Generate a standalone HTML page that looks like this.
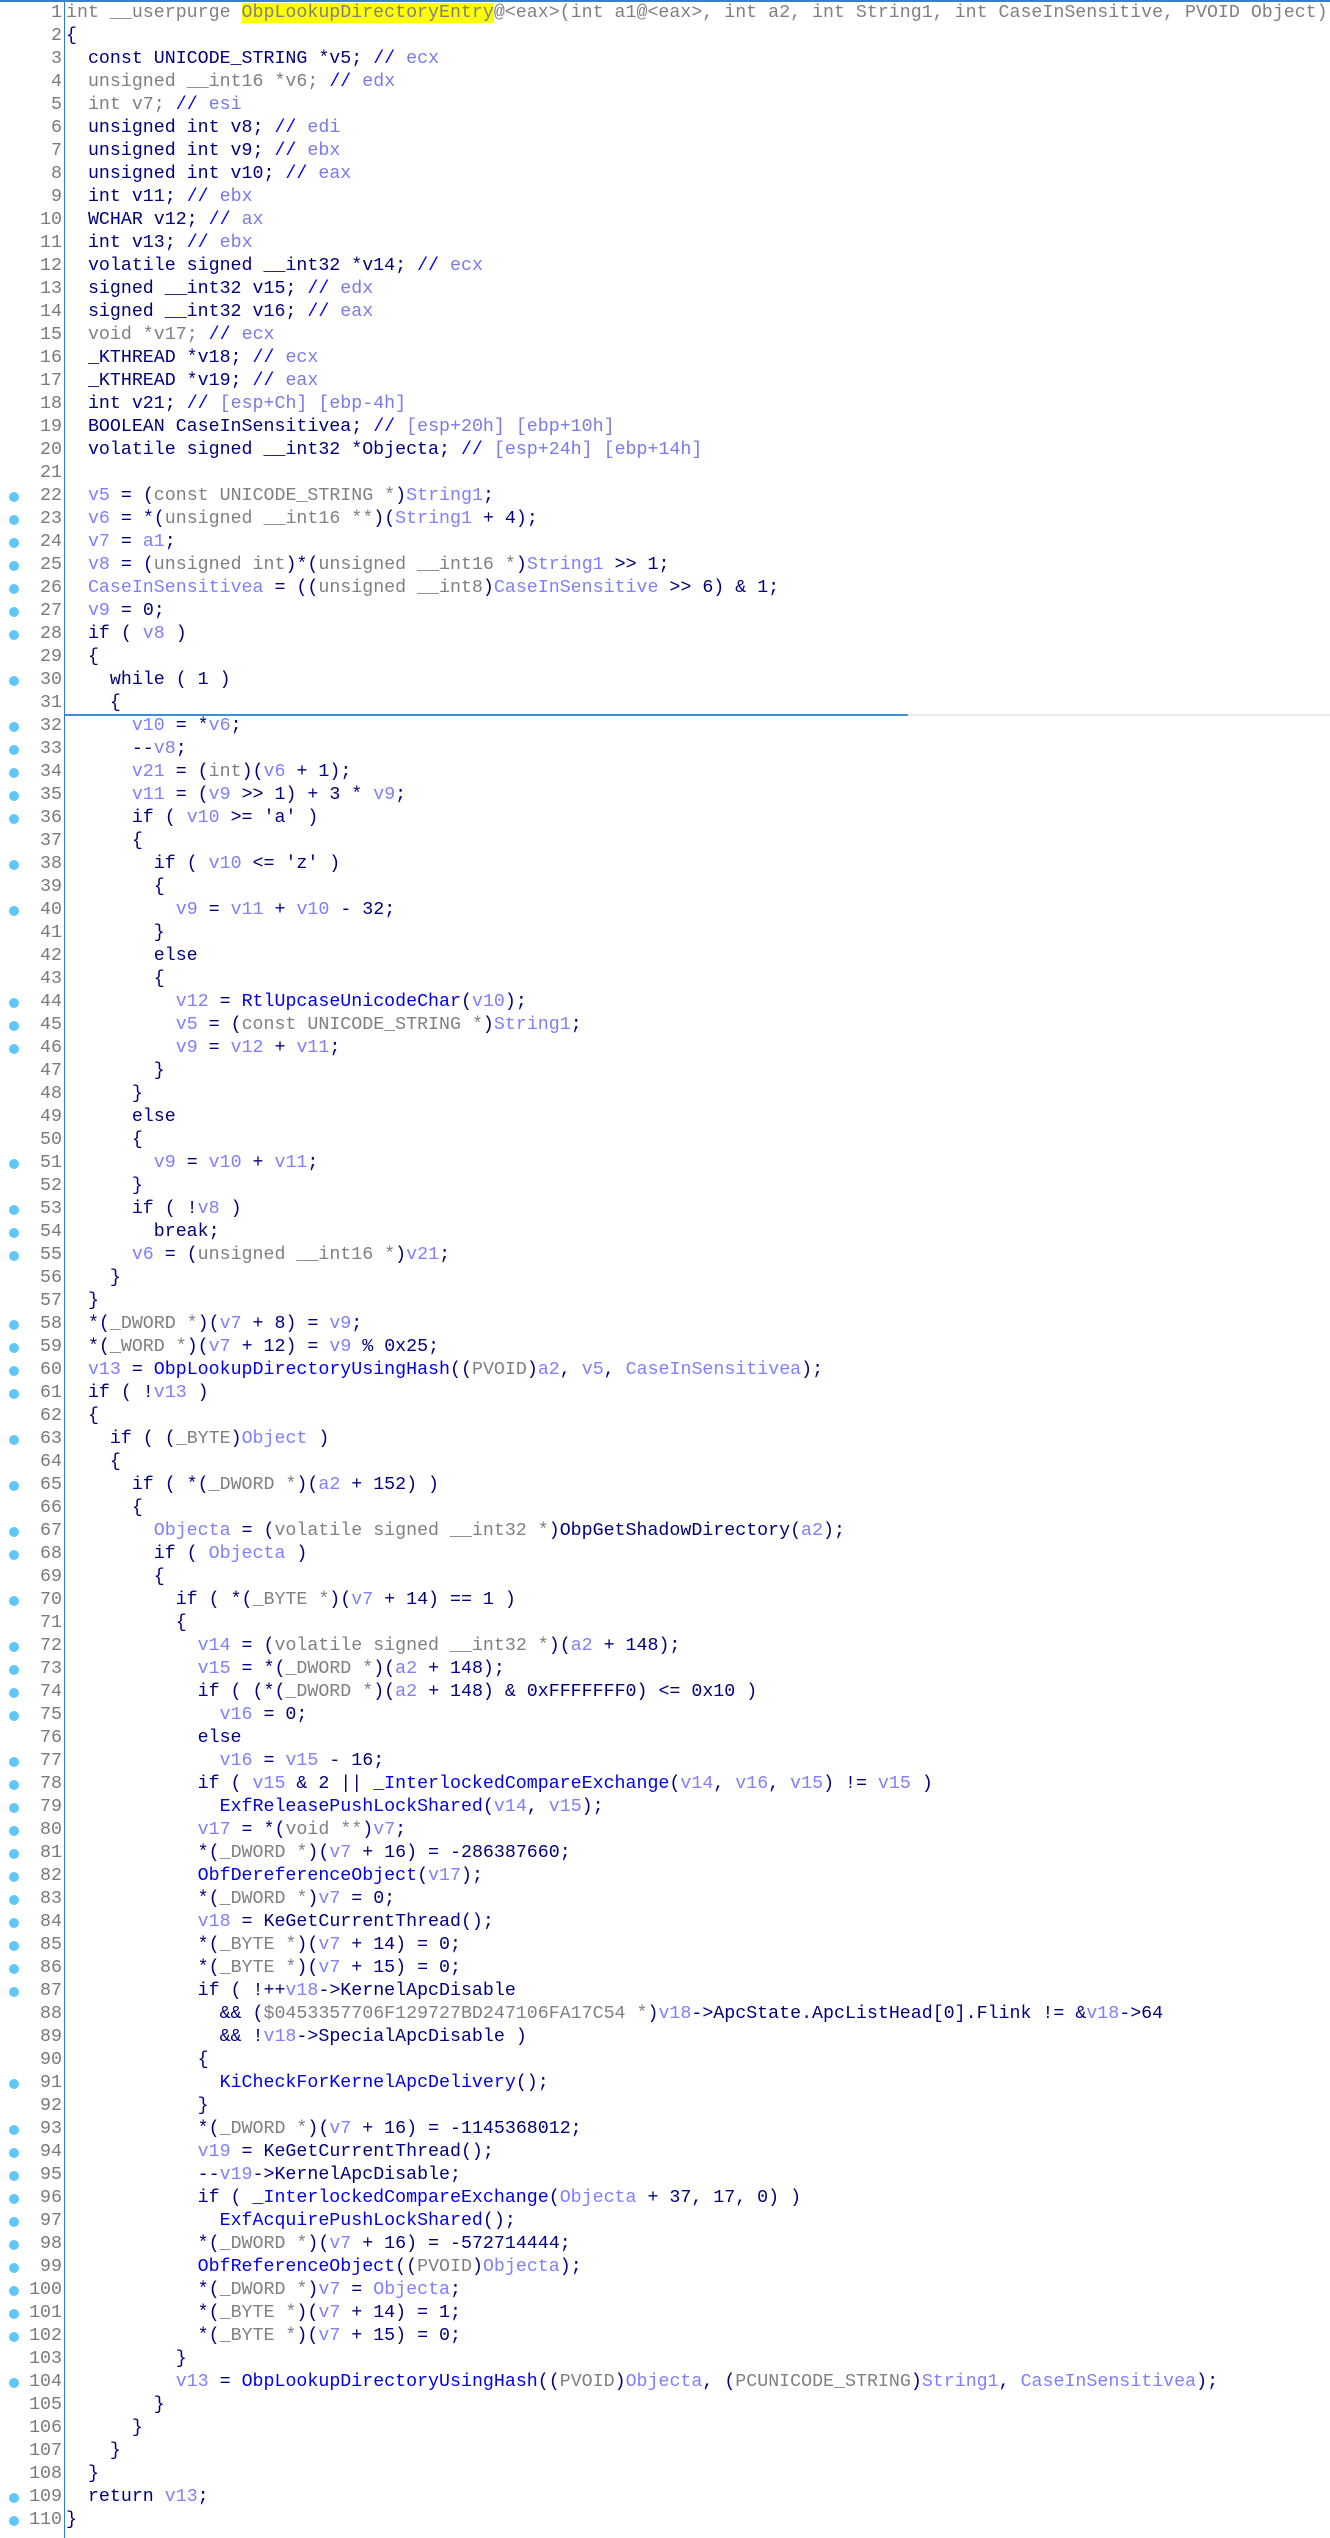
<!DOCTYPE html>
<html><head><meta charset="utf-8">
<style>
html,body{margin:0;padding:0;background:#fff;width:1330px;height:2538px;overflow:hidden}
#w{position:relative;width:1330px;height:2538px;border-top:2px solid #3d7fc4;box-sizing:border-box}
#gut{position:absolute;left:0;top:0;width:64px;height:2538px;border-right:1px solid #2b7bd6}
.ln{position:absolute;left:0;width:62px;height:23px;text-align:right;color:#7a7a7a;font:18.3px/23px "Liberation Mono",monospace}
.d{position:absolute;left:9px;top:7px;width:10px;height:10px;border-radius:50%;background:#5fc8fb}
#code{position:absolute;left:66px;top:0;margin:0;font:18.3px/23px "Liberation Mono",monospace;color:#00007f;white-space:pre}
g{color:#808080} v{color:#7f7fff} c{color:#0000ff} r{color:#7a7ae8} f{color:#0000ee}
h{background:#ffff00;color:#808080}
#sep{position:absolute;left:65px;top:712px;width:843px;height:2px;background:#3d8fd6}
#sep2{position:absolute;left:908px;top:712px;width:422px;height:2px;background:#e8e8e8}
</style></head><body><div id="w">
<div id="gut"></div>
<div id="sep"></div><div id="sep2"></div>
<div id="nums"></div>
<pre id="code"><g>int __userpurge <h>ObpLookupDirectoryEntry</h>@&lt;eax&gt;(int a1@&lt;eax&gt;, int a2, int String1, int CaseInSensitive, PVOID Object)</g>
{
  const UNICODE_STRING *v5; <c>//</c> <r>ecx</r>
  <g>unsigned __int16 *v6;</g> <c>//</c> <r>edx</r>
  <g>int v7;</g> <c>//</c> <r>esi</r>
  unsigned int v8; <c>//</c> <r>edi</r>
  unsigned int v9; <c>//</c> <r>ebx</r>
  unsigned int v10; <c>//</c> <r>eax</r>
  int v11; <c>//</c> <r>ebx</r>
  WCHAR v12; <c>//</c> <r>ax</r>
  int v13; <c>//</c> <r>ebx</r>
  volatile signed __int32 *v14; <c>//</c> <r>ecx</r>
  signed __int32 v15; <c>//</c> <r>edx</r>
  signed __int32 v16; <c>//</c> <r>eax</r>
  <g>void *v17;</g> <c>//</c> <r>ecx</r>
  _KTHREAD *v18; <c>//</c> <r>ecx</r>
  _KTHREAD *v19; <c>//</c> <r>eax</r>
  int v21; <c>//</c> <r>[esp+Ch] [ebp-4h]</r>
  BOOLEAN CaseInSensitivea; <c>//</c> <r>[esp+20h] [ebp+10h]</r>
  volatile signed __int32 *Objecta; <c>//</c> <r>[esp+24h] [ebp+14h]</r>

  <v>v5</v> = (<g>const UNICODE_STRING *</g>)<v>String1</v>;
  <v>v6</v> = *(<g>unsigned __int16 **</g>)(<v>String1</v> + 4);
  <v>v7</v> = <v>a1</v>;
  <v>v8</v> = (<g>unsigned int</g>)*(<g>unsigned __int16 *</g>)<v>String1</v> &gt;&gt; 1;
  <v>CaseInSensitivea</v> = ((<g>unsigned __int8</g>)<v>CaseInSensitive</v> &gt;&gt; 6) &amp; 1;
  <v>v9</v> = 0;
  if ( <v>v8</v> )
  {
    while ( 1 )
    {
      <v>v10</v> = *<v>v6</v>;
      --<v>v8</v>;
      <v>v21</v> = (<g>int</g>)(<v>v6</v> + 1);
      <v>v11</v> = (<v>v9</v> &gt;&gt; 1) + 3 * <v>v9</v>;
      if ( <v>v10</v> &gt;= 'a' )
      {
        if ( <v>v10</v> &lt;= 'z' )
        {
          <v>v9</v> = <v>v11</v> + <v>v10</v> - 32;
        }
        else
        {
          <v>v12</v> = <f>RtlUpcaseUnicodeChar</f>(<v>v10</v>);
          <v>v5</v> = (<g>const UNICODE_STRING *</g>)<v>String1</v>;
          <v>v9</v> = <v>v12</v> + <v>v11</v>;
        }
      }
      else
      {
        <v>v9</v> = <v>v10</v> + <v>v11</v>;
      }
      if ( !<v>v8</v> )
        break;
      <v>v6</v> = (<g>unsigned __int16 *</g>)<v>v21</v>;
    }
  }
  *(<g>_DWORD *</g>)(<v>v7</v> + 8) = <v>v9</v>;
  *(<g>_WORD *</g>)(<v>v7</v> + 12) = <v>v9</v> % 0x25;
  <v>v13</v> = <f>ObpLookupDirectoryUsingHash</f>((<g>PVOID</g>)<v>a2</v>, <v>v5</v>, <v>CaseInSensitivea</v>);
  if ( !<v>v13</v> )
  {
    if ( (<g>_BYTE</g>)<v>Object</v> )
    {
      if ( *(<g>_DWORD *</g>)(<v>a2</v> + 152) )
      {
        <v>Objecta</v> = (<g>volatile signed __int32 *</g>)ObpGetShadowDirectory(<v>a2</v>);
        if ( <v>Objecta</v> )
        {
          if ( *(<g>_BYTE *</g>)(<v>v7</v> + 14) == 1 )
          {
            <v>v14</v> = (<g>volatile signed __int32 *</g>)(<v>a2</v> + 148);
            <v>v15</v> = *(<g>_DWORD *</g>)(<v>a2</v> + 148);
            if ( (*(<g>_DWORD *</g>)(<v>a2</v> + 148) &amp; 0xFFFFFFF0) &lt;= 0x10 )
              <v>v16</v> = 0;
            else
              <v>v16</v> = <v>v15</v> - 16;
            if ( <v>v15</v> &amp; 2 || <f>_InterlockedCompareExchange</f>(<v>v14</v>, <v>v16</v>, <v>v15</v>) != <v>v15</v> )
              <f>ExfReleasePushLockShared</f>(<v>v14</v>, <v>v15</v>);
            <v>v17</v> = *(<g>void **</g>)<v>v7</v>;
            *(<g>_DWORD *</g>)(<v>v7</v> + 16) = -286387660;
            <f>ObfDereferenceObject</f>(<v>v17</v>);
            *(<g>_DWORD *</g>)<v>v7</v> = 0;
            <v>v18</v> = KeGetCurrentThread();
            *(<g>_BYTE *</g>)(<v>v7</v> + 14) = 0;
            *(<g>_BYTE *</g>)(<v>v7</v> + 15) = 0;
            if ( !++<v>v18</v>-&gt;KernelApcDisable
              &amp;&amp; (<g>$0453357706F129727BD247106FA17C54 *</g>)<v>v18</v>-&gt;ApcState.ApcListHead[0].Flink != &amp;<v>v18</v>-&gt;64
              &amp;&amp; !<v>v18</v>-&gt;SpecialApcDisable )
            {
              <f>KiCheckForKernelApcDelivery</f>();
            }
            *(<g>_DWORD *</g>)(<v>v7</v> + 16) = -1145368012;
            <v>v19</v> = KeGetCurrentThread();
            --<v>v19</v>-&gt;KernelApcDisable;
            if ( <f>_InterlockedCompareExchange</f>(<v>Objecta</v> + 37, 17, 0) )
              <f>ExfAcquirePushLockShared</f>();
            *(<g>_DWORD *</g>)(<v>v7</v> + 16) = -572714444;
            <f>ObfReferenceObject</f>((<g>PVOID</g>)<v>Objecta</v>);
            *(<g>_DWORD *</g>)<v>v7</v> = <v>Objecta</v>;
            *(<g>_BYTE *</g>)(<v>v7</v> + 14) = 1;
            *(<g>_BYTE *</g>)(<v>v7</v> + 15) = 0;
          }
          <v>v13</v> = <f>ObpLookupDirectoryUsingHash</f>((<g>PVOID</g>)<v>Objecta</v>, (<g>PCUNICODE_STRING</g>)<v>String1</v>, <v>CaseInSensitivea</v>);
        }
      }
    }
  }
  return <v>v13</v>;
}</pre>
</div>
<script>
var dots=[22,23,24,25,26,27,28,30,32,33,34,35,36,38,40,44,45,46,51,53,54,55,58,59,60,61,63,65,67,68,70,72,73,74,75,77,78,79,80,81,82,83,84,85,86,87,91,93,94,95,96,97,98,99,100,101,102,104,109,110];
var h='';
for(var i=1;i<=110;i++){var t=(i-1)*23;h+='<div class="ln" style="top:'+t+'px">'+i+'</div>';if(dots.indexOf(i)>=0)h+='<div class="d" style="position:absolute;top:'+(t+7)+'px"></div>';}
document.getElementById('nums').innerHTML=h;
</script>
</body></html>
